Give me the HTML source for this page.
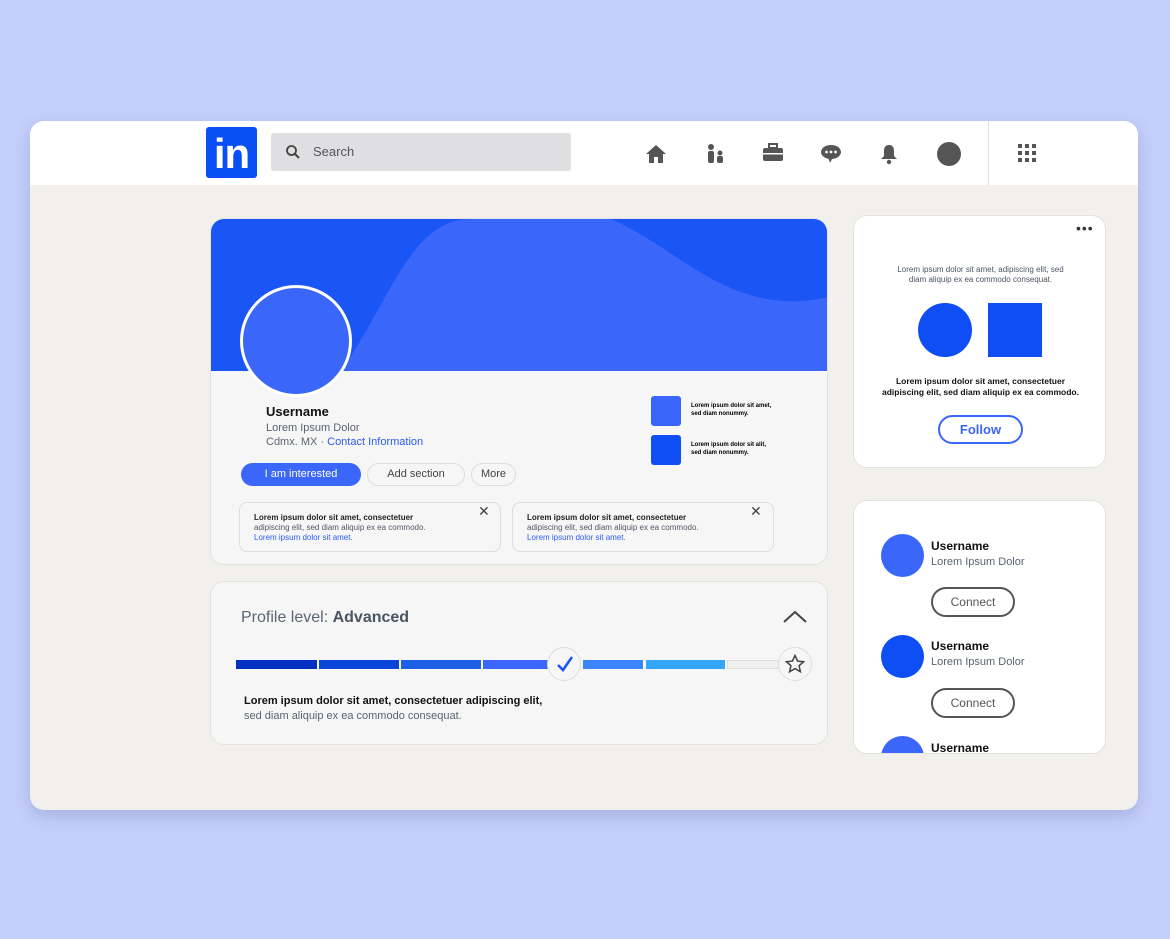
<!DOCTYPE html>
<html><head><meta charset="utf-8"><style>
*{margin:0;padding:0;box-sizing:border-box}
body{width:1170px;height:939px;background:#c5cffc;font-family:"Liberation Sans",sans-serif;position:relative;overflow:hidden}
.a{position:absolute}
.win{left:30px;top:121px;width:1108px;height:689px;background:#f1f0ed;border-radius:14px;overflow:hidden;box-shadow:0 6px 16px rgba(80,90,140,.25)}
.hdr{left:0;top:0;width:1108px;height:64px;background:#fff}
.card{background:#f6f6f6;border:1px solid #e2e2e0;border-radius:14px;overflow:hidden}
.wcard{background:#fff;border:1px solid #e2e2e0;border-radius:14px;overflow:hidden}
.pill{border-radius:14px;font-size:11px;text-align:center}
.small{font-size:8px;line-height:10px}
</style></head><body>
<div class="a win">
 <div class="a hdr">
  <div class="a" style="left:176px;top:6px;width:51px;height:51px;background:#0a4ff5;border-radius:3px;color:#fff;font-weight:bold;font-size:42px;line-height:53px;text-align:center;letter-spacing:-1px">in</div>
  <div class="a" style="left:241px;top:12px;width:300px;height:38px;background:#dfdfe2;border-radius:3px"></div>
  <svg class="a" style="left:255px;top:23px" width="16" height="16" viewBox="0 0 16 16"><circle cx="6.5" cy="6.5" r="4.5" fill="none" stroke="#444" stroke-width="1.8"/><path d="M10 10l4 4" stroke="#444" stroke-width="2"/></svg>
  <div class="a" style="left:283px;top:23px;font-size:13px;color:#555">Search</div>
  <svg class="a" style="left:614px;top:22px" width="24" height="22" viewBox="0 0 24 22"><path d="M12 2L2 11h3v9h5v-6h4v6h5v-9h3z" fill="#555"/></svg>
  <svg class="a" style="left:676px;top:22px" width="20" height="22" viewBox="0 0 20 22"><circle cx="5" cy="4" r="3" fill="#555"/><rect x="2" y="8" width="6" height="12" rx="2" fill="#555"/><circle cx="14" cy="10" r="2.5" fill="#555"/><rect x="11" y="13" width="6" height="7" rx="2" fill="#555"/></svg>
  <svg class="a" style="left:732px;top:22px" width="22" height="20" viewBox="0 0 22 20"><rect x="7" y="1" width="8" height="4" fill="none" stroke="#555" stroke-width="2"/><rect x="1" y="5" width="20" height="13" rx="2" fill="#555"/><rect x="1" y="10" width="20" height="1.5" fill="#fff"/></svg>
  <svg class="a" style="left:790px;top:23px" width="22" height="20" viewBox="0 0 22 20"><ellipse cx="11" cy="8" rx="10" ry="7" fill="#555"/><path d="M8 13l2 6 3-6z" fill="#555"/><circle cx="6.5" cy="8" r="1.4" fill="#fff"/><circle cx="11" cy="8" r="1.4" fill="#fff"/><circle cx="15.5" cy="8" r="1.4" fill="#fff"/></svg>
  <svg class="a" style="left:849px;top:22px" width="20" height="22" viewBox="0 0 20 22"><path d="M10 2c-4 0-5 3-5 6v5l-3 3h16l-3-3V8c0-3-1-6-5-6z" fill="#555"/><circle cx="10" cy="19" r="2.2" fill="#555"/></svg>
  <div class="a" style="left:907px;top:21px;width:24px;height:24px;border-radius:50%;background:#555"></div>
  <div class="a" style="left:958px;top:0;width:1px;height:64px;background:#e0e0e0"></div>
  <svg class="a" style="left:988px;top:23px" width="20" height="20" viewBox="0 0 20 20" fill="#555"><rect x="0" y="0" width="4" height="4"/><rect x="7" y="0" width="4" height="4"/><rect x="14" y="0" width="4" height="4"/><rect x="0" y="7" width="4" height="4"/><rect x="7" y="7" width="4" height="4"/><rect x="14" y="7" width="4" height="4"/><rect x="0" y="14" width="4" height="4"/><rect x="7" y="14" width="4" height="4"/><rect x="14" y="14" width="4" height="4"/></svg>
 </div>

 <div class="a card" style="left:180px;top:97px;width:618px;height:347px">
  <svg class="a" style="left:0;top:0" width="618" height="152" viewBox="0 0 618 152"><rect width="618" height="152" fill="#1a55f5"/><path d="M130 152C180 80 200 0 260 0L400 0C470 30 520 100 618 78V152z" fill="#3b66fa"/></svg>
  <div class="a" style="left:29px;top:66px;width:112px;height:112px;border-radius:50%;background:#3b66fa;border:3px solid #fff"></div>
  <div class="a" style="left:55px;top:185px;font-size:13px;font-weight:bold;color:#111">Username</div>
  <div class="a" style="left:55px;top:203px;font-size:11px;color:#5a6472">Lorem Ipsum Dolor</div>
  <div class="a" style="left:55px;top:217px;font-size:11px;color:#5a6472">Cdmx. MX · <span style="color:#2c5cf5">Contact Information</span></div>
  <div class="a pill" style="left:30px;top:244px;width:120px;height:23px;line-height:23px;background:#3b66fa;color:#fff">I am interested</div>
  <div class="a pill" style="left:156px;top:244px;width:98px;height:23px;line-height:21px;border:1px solid #ddd;color:#444">Add section</div>
  <div class="a pill" style="left:260px;top:244px;width:45px;height:23px;line-height:21px;border:1px solid #ddd;color:#444">More</div>
  <div class="a" style="left:440px;top:177px;width:30px;height:30px;border-radius:3px;background:#3b66fa"></div>
  <div class="a" style="left:440px;top:216px;width:30px;height:30px;border-radius:3px;background:#0f4ef5"></div>
  <div class="a" style="left:480px;top:183px;font-size:6px;font-weight:bold;line-height:8px">Lorem ipsum dolor sit amet,<br>sed diam nonummy.</div>
  <div class="a" style="left:480px;top:222px;font-size:6px;font-weight:bold;line-height:8px">Lorem ipsum dolor sit alit,<br>sed diam nonummy.</div>
  <div class="a" style="left:28px;top:283px;width:262px;height:50px;border:1px solid #ddd;border-radius:8px"></div>
  <div class="a" style="left:301px;top:283px;width:262px;height:50px;border:1px solid #ddd;border-radius:8px"></div>
  <div class="a small" style="left:43px;top:294px;color:#222"><b>Lorem ipsum dolor sit amet, consectetuer</b><br><span style="color:#556">adipiscing elit, sed diam aliquip ex ea commodo.</span><br><span style="color:#2c5cf5">Lorem ipsum dolor sit amet.</span></div>
  <div class="a small" style="left:316px;top:294px;color:#222"><b>Lorem ipsum dolor sit amet, consectetuer</b><br><span style="color:#556">adipiscing elit, sed diam aliquip ex ea commodo.</span><br><span style="color:#2c5cf5">Lorem ipsum dolor sit amet.</span></div>
  <div class="a" style="left:267px;top:284px;font-size:14px;color:#444">✕</div>
  <div class="a" style="left:539px;top:284px;font-size:14px;color:#444">✕</div>
 </div>

 <div class="a card" style="left:180px;top:460px;width:618px;height:164px">
  <div class="a" style="left:30px;top:27px;font-size:16px;color:#5a6472">Profile level: <b style="color:#4a5462">Advanced</b></div>
  <svg class="a" style="left:571px;top:28px" width="26" height="14"><path d="M2 12L13 2l11 10" fill="none" stroke="#444" stroke-width="2"/></svg>
  <div class="a" style="left:25px;top:78px;width:81px;height:9px;background:#0031c0"></div>
  <div class="a" style="left:108px;top:78px;width:80px;height:9px;background:#0a45da"></div>
  <div class="a" style="left:190px;top:78px;width:80px;height:9px;background:#1e5fe8"></div>
  <div class="a" style="left:272px;top:78px;width:70px;height:9px;background:#3b66fa"></div>
  <div class="a" style="left:372px;top:78px;width:60px;height:9px;background:#3a85fa"></div>
  <div class="a" style="left:435px;top:78px;width:79px;height:9px;background:#33a6fb"></div>
  <div class="a" style="left:516px;top:78px;width:55px;height:9px;background:#f0f0f0;border:1px solid #ddd"></div>
  <div class="a" style="left:336px;top:65px;width:34px;height:34px;border-radius:50%;background:#f6f6f6;border:1px solid #ddd"></div>
  <svg class="a" style="left:344px;top:72px" width="20" height="20"><path d="M3 11l5 5 9-13" fill="none" stroke="#1a55f5" stroke-width="2.5"/></svg>
  <div class="a" style="left:567px;top:65px;width:34px;height:34px;border-radius:50%;background:#f6f6f6;border:1px solid #ddd"></div>
  <svg class="a" style="left:574px;top:72px" width="20" height="20" viewBox="0 0 20 20"><path d="M10 1.5l2.6 5.6 6 .6-4.5 4 1.3 6L10 14.6 4.6 17.7l1.3-6-4.5-4 6-.6z" fill="none" stroke="#444" stroke-width="1.5"/></svg>
  <div class="a" style="left:33px;top:113px;font-size:11px;font-weight:bold;color:#111">Lorem ipsum dolor sit amet, consectetuer adipiscing elit,</div>
  <div class="a" style="left:33px;top:128px;font-size:11px;color:#5a6472">sed diam aliquip ex ea commodo consequat.</div>
 </div>

 <div class="a wcard" style="left:823px;top:94px;width:253px;height:253px">
  <div class="a" style="left:222px;top:4px;font-size:14px;color:#333;letter-spacing:1px">•••</div>
  <div class="a" style="left:0;top:49px;width:253px;text-align:center;font-size:8px;line-height:10px;color:#4a5462">Lorem ipsum dolor sit amet, adipiscing elit, sed<br>diam aliquip ex ea commodo consequat.</div>
  <div class="a" style="left:64px;top:87px;width:54px;height:54px;border-radius:50%;background:#0f4ef5"></div>
  <div class="a" style="left:134px;top:87px;width:54px;height:54px;background:#0f4ef5"></div>
  <div class="a" style="left:0;top:160px;width:253px;text-align:center;font-size:8.5px;line-height:11px;font-weight:bold;color:#111">Lorem ipsum dolor sit amet, consectetuer<br>adipiscing elit, sed diam aliquip ex ea commodo.</div>
  <div class="a" style="left:84px;top:199px;width:85px;height:29px;border:2px solid #3b66fa;border-radius:15px;text-align:center;line-height:25px;font-size:13px;font-weight:bold;color:#3b66fa">Follow</div>
 </div>

 <div class="a wcard" style="left:823px;top:379px;width:253px;height:254px">
  <div class="a" style="left:27px;top:33px;width:43px;height:43px;border-radius:50%;background:#3b66fa"></div>
  <div class="a" style="left:77px;top:38px;font-size:12px;font-weight:bold;color:#111">Username</div>
  <div class="a" style="left:77px;top:55px;font-size:11px;color:#5a6472">Lorem Ipsum Dolor</div>
  <div class="a" style="left:77px;top:86px;width:84px;height:30px;border:2px solid #555;border-radius:15px;text-align:center;line-height:26px;font-size:12px;color:#555">Connect</div>
  <div class="a" style="left:27px;top:134px;width:43px;height:43px;border-radius:50%;background:#0f4ef5"></div>
  <div class="a" style="left:77px;top:138px;font-size:12px;font-weight:bold;color:#111">Username</div>
  <div class="a" style="left:77px;top:155px;font-size:11px;color:#5a6472">Lorem Ipsum Dolor</div>
  <div class="a" style="left:77px;top:187px;width:84px;height:30px;border:2px solid #555;border-radius:15px;text-align:center;line-height:26px;font-size:12px;color:#555">Connect</div>
  <div class="a" style="left:27px;top:235px;width:43px;height:43px;border-radius:50%;background:#3b66fa"></div>
  <div class="a" style="left:77px;top:240px;font-size:12px;font-weight:bold;color:#111">Username</div>
 </div>
</div>
</body></html>
